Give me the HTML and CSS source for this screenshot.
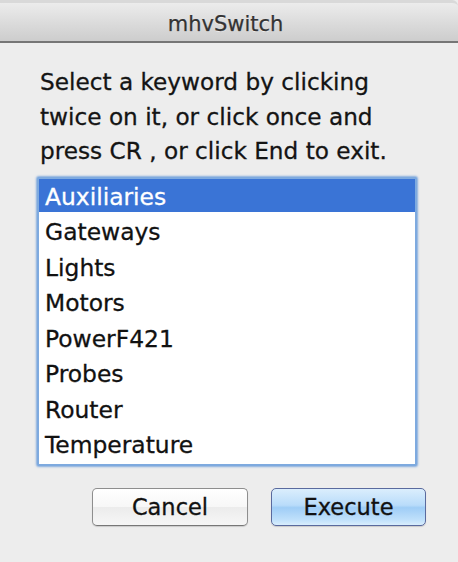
FILE: index.html
```html
<!DOCTYPE html>
<html>
<head>
<meta charset="utf-8">
<link rel="stylesheet" href="styles.css">
</head>
<body>
<div class="window">
  <header class="titlebar"><span class="title">mhvSwitch</span></header>
  <main class="content">
    <p class="prompt">Select a keyword by clicking<br>twice on it, or click once and<br>press CR , or click End to exit.</p>
    <ul class="list">
      <li class="item selected">Auxiliaries</li>
      <li class="item">Gateways</li>
      <li class="item">Lights</li>
      <li class="item">Motors</li>
      <li class="item">PowerF421</li>
      <li class="item">Probes</li>
      <li class="item">Router</li>
      <li class="item">Temperature</li>
    </ul>
    <div class="buttons">
      <button class="btn">Cancel</button>
      <button class="btn btn-default">Execute</button>
    </div>
  </main>
</div>
</body>
</html>
```
FILE: styles.css
```css
html, body {
  margin: 0;
  padding: 0;
  background: #ededed;
}
body {
  width: 458px;
  height: 562px;
  overflow: hidden;
  font-family: "DejaVu Sans", "Noto Sans", sans-serif;
  color: #111;
}
.window {
  display: flex;
  flex-direction: column;
  height: 562px;
}
.titlebar {
  box-sizing: border-box;
  height: 43px;
  border-top: 3px solid #d9d9d9;
  border-bottom: 2px solid #767676;
  border-top-right-radius: 6px;
  background: linear-gradient(#ececec, #d9d9d9 60%, #cdcdcd);
  display: flex;
  align-items: center;
  justify-content: center;
  padding-top: 4px;
}
.title {
  font-size: 21px;
  color: #333;
  -webkit-text-stroke: 0.25px #333;
  text-shadow: 0 1px 0 rgba(255,255,255,0.6);
  margin-left: -7px;
}
.content {
  display: flex;
  flex-direction: column;
  padding: 22px 0 0 0;
}
.prompt {
  margin: 0 0 0 40px;
  font-size: 23.2px;
  line-height: 34.5px;
  color: #141414;
  -webkit-text-stroke: 0.3px #141414;
}
.list {
  list-style: none;
  margin: 8px 0 0 37px;
  padding: 0;
  width: 380px;
  height: 289px;
  box-sizing: border-box;
  background: #fff;
  border: 2px solid #7eaadf;
  border-radius: 2px;
  box-shadow: 0 0 2px 1px rgba(90, 145, 215, 0.7);
  overflow: hidden;
}
.item {
  height: 35.5px;
  line-height: 37px;
  padding-left: 6px;
  font-size: 23.4px;
  color: #111;
  -webkit-text-stroke: 0.3px #111;
}
.item.selected {
  background: linear-gradient(#3a74d6, #3a74d6) top left / 100% 33px no-repeat;
  color: #fff;
  -webkit-text-stroke: 0.3px #fff;
}
.buttons {
  display: flex;
  gap: 23px;
  margin: 22px 0 0 92px;
}
.btn {
  width: 156px;
  height: 38px;
  box-sizing: border-box;
  border: 1px solid #8e8e8e;
  border-bottom-color: #777;
  border-radius: 5px;
  background: linear-gradient(#ffffff, #f7f7f7 50%, #ececec 51%, #f6f6f6);
  font-family: "DejaVu Sans", "Noto Sans", sans-serif;
  font-size: 22.5px;
  color: #111;
  -webkit-text-stroke: 0.3px #111;
  padding: 0;
  box-shadow: 0 1px 1px rgba(0,0,0,0.15);
}
.btn-default {
  width: 155px;
  border-color: #5a6a9e;
  background: linear-gradient(#dbeefd, #b9dcfa 45%, #9fcdf6 52%, #bfe0fb 85%, #d9eefd);
}
```
